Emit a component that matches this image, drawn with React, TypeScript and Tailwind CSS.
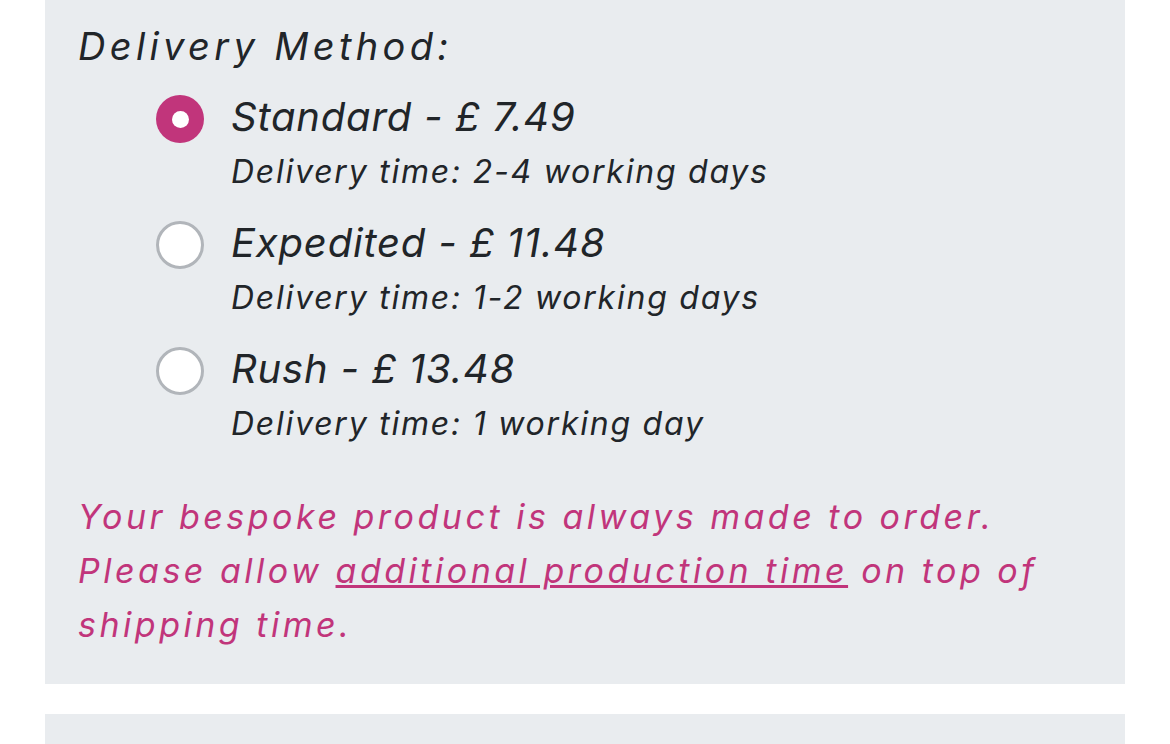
const options = [
  { id: "standard", name: "Standard", price: "£ 7.49", time: "2-4 working days" },
  { id: "expedited", name: "Expedited", price: "£ 11.48", time: "1-2 working days" },
  { id: "rush", name: "Rush", price: "£ 13.48", time: "1 working day" },
];

const App = () => {
  const selected = "standard";

  return (
    <div className="min-h-screen bg-white font-['Inter',sans-serif] font-normal italic text-[#212529]">
      <div className="mx-[45px] w-[1080px] bg-[#e9ecef] pl-[33px] pr-[33px] pt-[16px] pb-[32px]">
        <h2 className="text-[38px] leading-[60px] tracking-[0.114em]">Delivery Method:</h2>
        <div className="mt-[13px] flex flex-col gap-[16px] pl-[78px]">
          {options.map((o) => (
            <label key={o.id} className="flex gap-[27px]">
              <span className="mt-[6px] flex h-[48px] w-[48px] shrink-0 items-center justify-center">
                {o.id === selected ? (
                  <span className="flex h-[48px] w-[48px] items-center justify-center rounded-full bg-[#c1357b]">
                    <span className="h-[17px] w-[17px] rounded-full bg-white" />
                  </span>
                ) : (
                  <span className="h-[48px] w-[48px] rounded-full border-[3px] border-[#b1b5ba] bg-white" />
                )}
              </span>
              <span className="flex flex-col">
                <span className="text-[40px] leading-[56px] tracking-[0.02em]">
                  {o.name} - {o.price}
                </span>
                <span className="text-[32px] leading-[54px] tracking-[0.055em]">
                  Delivery time: {o.time}
                </span>
              </span>
            </label>
          ))}
        </div>
        <p className="mt-[39px] text-[34px] leading-[54px] tracking-[0.103em] text-[#c1357b]">
          Your bespoke product is always made to order.
          <br />
          Please allow{" "}
          <a href="#" className="underline">
            additional production time
          </a>{" "}
          on top of shipping time.
        </p>
      </div>
      <div className="mx-[45px] mt-[30px] h-[200px] w-[1080px] bg-[#e9ecef]" />
    </div>
  );
};

export default App;
